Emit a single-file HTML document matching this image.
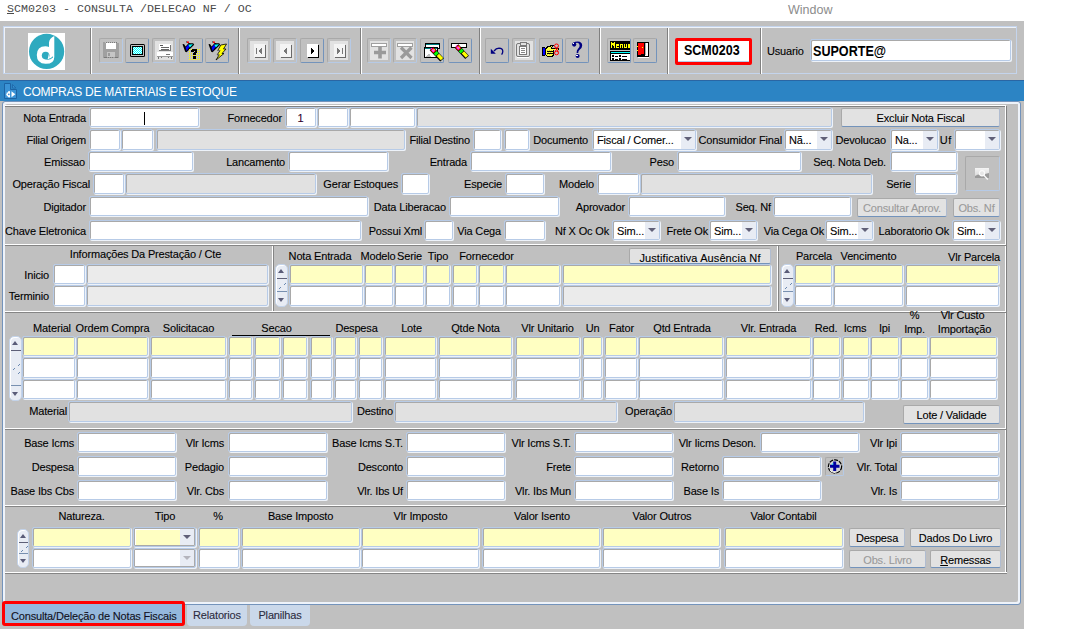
<!DOCTYPE html><html><head><meta charset="utf-8"><style>
*{margin:0;padding:0;box-sizing:border-box}
html,body{width:1080px;height:629px;overflow:hidden;background:#fff}
body{position:relative;font-family:"Liberation Sans",sans-serif;font-size:11px;color:#000}
div{position:absolute}
.l{white-space:nowrap;line-height:13px;letter-spacing:-0.17px;-webkit-text-stroke:0.1px currentColor}
.r{text-align:right}
.c{text-align:center}
.f{background:#fff;border:1px solid #b7cbe7;border-radius:2px;box-shadow:inset 1px 1px 0 #a9a9a9,1px 1px 0 #edf2f9}
.d{background:#e1e1e1}
.d2{background:#ebebeb}
.y{background:#ffffc2}
.s .st{position:absolute;left:4px;top:4px;line-height:13px;letter-spacing:-0.17px;white-space:nowrap;-webkit-text-stroke:0.1px #000}
.s .sa{position:absolute;right:0;top:1px;bottom:0;width:14px;background:#e8ecf4}
.sr{box-shadow:inset 0 0 0 1px #a9a9a9,inset 2px 2px 0 #fff,1px 1px 0 #edf2f9}
.sr .sa{right:1px;top:1px;bottom:1px}
.s .sa i{position:absolute;left:3px;top:6px;width:0;height:0;border-left:4px solid transparent;border-right:4px solid transparent;border-top:4.5px solid #606078}
.s .sad i{border-top-color:#b4b4bc}
.b{background:#e2e2e2;border:1px solid #a9a9a9;border-bottom-color:#7393bb;border-right-color:#b0bcd0;border-radius:2px;text-align:center;line-height:16px;padding-top:1px;letter-spacing:-0.17px;white-space:nowrap;color:#000;-webkit-text-stroke:0.1px currentColor}
.bd{color:#9a9a9a}
.hs{height:2px;border-top:1px solid #fff;border-bottom:1px solid #858585}
.vs{width:2px;border-left:1px solid #fff;border-right:1px solid #858585}
.sc{background:#e8ecf4;border:1px solid #c3d3ea;border-radius:5px;box-shadow:inset 1px 1px 0 #fff}
.sc i{position:absolute;display:block}
.sc .up{left:2px;top:4px;width:0;height:0;border-left:3.5px solid transparent;border-right:3.5px solid transparent;border-bottom:4px solid #5a5c78}
.sc .dn{left:2px;bottom:4px;width:0;height:0;border-left:3.5px solid transparent;border-right:3.5px solid transparent;border-top:4px solid #5a5c78}
.sc .d1{left:1px;right:0;top:13px;height:1px;background:#5e6078}
.sc .d2{left:1px;right:0;bottom:14px;height:1px;background:#7890b0}
.sc .g{width:2px;height:2px;background:linear-gradient(135deg,transparent 30%,#6a88b0 30%,#6a88b0 70%,transparent 70%)}
.tb{border:1px solid #a9a9a9;border-right-color:#b6cae6;border-bottom-color:#b6cae6;border-radius:2px}
.tb2{border-right-color:#7393bb;border-bottom-color:#7393bb}
</style></head><body>
<div style="left:7px;top:3px;font:11.67px/13px 'Liberation Mono',monospace;color:#4a4a4a;white-space:nowrap"><u>S</u>CM0203 - CONSULTA /DELECAO NF / OC</div>
<div style="left:788px;top:3px;font:12.5px/14px 'Liberation Sans',sans-serif;color:#8c8c8c">Window</div>
<div style="left:0;top:21px;width:1024px;height:608px;background:#c0c0c0"></div>
<div style="left:3px;top:26px;width:1014px;height:48px;border:1px solid #c4d4ec;box-shadow:inset 1px 1px 0 #eef2f8"></div>
<div style="left:238px;top:28px;width:2px;height:46px;border-left:1px solid #808080;border-right:1px solid #fff"></div>
<div style="left:360px;top:28px;width:2px;height:46px;border-left:1px solid #808080;border-right:1px solid #fff"></div>
<div style="left:479px;top:28px;width:2px;height:46px;border-left:1px solid #808080;border-right:1px solid #fff"></div>
<div style="left:599px;top:28px;width:2px;height:46px;border-left:1px solid #808080;border-right:1px solid #fff"></div>
<div style="left:667px;top:28px;width:2px;height:46px;border-left:1px solid #808080;border-right:1px solid #fff"></div>
<div style="left:760px;top:28px;width:2px;height:46px;border-left:1px solid #808080;border-right:1px solid #fff"></div>
<div style="left:90px;top:28px;width:2px;height:46px;border-left:1px solid #808080;border-right:1px solid #fff"></div>
<div style="left:28px;top:33px;width:37px;height:37px;background:#fff"><svg width="37" height="37" viewBox="0 0 37 37"><circle cx="18.6" cy="18.4" r="17.6" fill="#2eaabf"/><path d="M26.3 3 L26.3 24 Q26.3 31 17.5 30.8 Q8.8 30.6 8.8 22 Q8.9 13.4 17.4 13.3 Q19.6 13.3 21 14 L21 9.5 Q21.4 5 26.3 3 Z" fill="#fff"/><circle cx="17.6" cy="22.6" r="3.8" fill="#2eaabf"/><path d="M17.2 26.3 Q21.5 27.8 25 24.6 L25 23.2 Q22 26 19.6 25.7 Z" fill="#2eaabf"/><path d="M21 20 L21 25.5 Q20.5 26.2 19.8 26 Z" fill="#fff"/></svg></div>
<div class="tb" style="left:99px;top:38px;width:24px;height:25px"><svg style="position:absolute;left:1px;top:0" width="22" height="23" viewBox="0 0 22 23" shape-rendering="crispEdges"><rect x="2" y="4" width="16" height="15" fill="#a0a0a0"/><g fill="#7a7a7a"><rect x="5" y="3" width="1" height="1"/><rect x="7" y="3" width="1" height="1"/><rect x="9" y="3" width="1" height="1"/><rect x="11" y="3" width="1" height="1"/><rect x="13" y="3" width="1" height="1"/><rect x="15" y="3" width="1" height="1"/><rect x="3" y="18" width="3" height="1"/><rect x="7" y="18" width="1" height="1"/><rect x="9" y="18" width="1" height="1"/><rect x="11" y="18" width="1" height="1"/><rect x="14" y="18" width="3" height="1"/></g><rect x="2" y="3" width="2" height="1" fill="#a0a0a0"/><rect x="5" y="4" width="10" height="6" fill="#fff"/><rect x="6" y="13" width="8" height="5" fill="#c6c6c6"/><rect x="7" y="14" width="2" height="3" fill="#9a9a9a"/></svg></div>
<div class="tb tb2" style="left:125px;top:38px;width:24px;height:25px"><svg style="position:absolute;left:0px;top:0" width="22" height="23" viewBox="0 0 22 23" shape-rendering="crispEdges"><rect x="4" y="5" width="15" height="13" rx="1.5" fill="#000" shape-rendering="auto"/><rect x="5" y="6" width="13" height="11" fill="#c0c0c0"/><rect x="6" y="7" width="11" height="9" fill="#000"/><rect x="7" y="8" width="9" height="7" fill="#00ffff"/><g fill="#e8ffff"><rect x="8" y="8" width="1" height="1"/><rect x="10" y="8" width="1" height="1"/><rect x="12" y="8" width="1" height="1"/><rect x="14" y="8" width="1" height="1"/><rect x="7" y="9" width="1" height="1"/><rect x="9" y="9" width="1" height="1"/><rect x="11" y="9" width="1" height="1"/><rect x="13" y="9" width="1" height="1"/><rect x="15" y="9" width="1" height="1"/><rect x="8" y="10" width="1" height="1"/><rect x="10" y="10" width="1" height="1"/><rect x="12" y="10" width="1" height="1"/><rect x="14" y="10" width="1" height="1"/><rect x="7" y="11" width="1" height="1"/><rect x="9" y="11" width="1" height="1"/><rect x="11" y="11" width="1" height="1"/><rect x="13" y="11" width="1" height="1"/><rect x="15" y="11" width="1" height="1"/><rect x="8" y="12" width="1" height="1"/><rect x="10" y="12" width="1" height="1"/><rect x="12" y="12" width="1" height="1"/><rect x="14" y="12" width="1" height="1"/><rect x="7" y="13" width="1" height="1"/><rect x="9" y="13" width="1" height="1"/><rect x="11" y="13" width="1" height="1"/><rect x="13" y="13" width="1" height="1"/><rect x="15" y="13" width="1" height="1"/><rect x="8" y="14" width="1" height="1"/><rect x="10" y="14" width="1" height="1"/><rect x="12" y="14" width="1" height="1"/><rect x="14" y="14" width="1" height="1"/></g></svg></div>
<div class="tb" style="left:152px;top:38px;width:24px;height:25px"><div style="left:2px;top:2px;right:2px;bottom:2px;background:#e2e2e2"></div><svg style="position:absolute;left:0px;top:0" width="22" height="23" viewBox="0 0 22 23" shape-rendering="crispEdges"><rect x="6" y="5" width="12" height="7" fill="#fff"/><rect x="6" y="11" width="12" height="1" fill="#777"/><rect x="17" y="6" width="1" height="6" fill="#777"/><rect x="7" y="6" width="3" height="1" fill="#555"/><rect x="8" y="8" width="8" height="1" fill="#666"/><rect x="8" y="10" width="8" height="1" fill="#666"/><rect x="4" y="13" width="16" height="5" fill="#fff"/><rect x="4" y="17" width="16" height="1" fill="#9a9a9a"/><rect x="13" y="15" width="4" height="1" fill="#777"/><rect x="5" y="18" width="1" height="2" fill="#777"/><rect x="8" y="18" width="1" height="1" fill="#777"/><rect x="15" y="18" width="1" height="1" fill="#777"/><rect x="18" y="18" width="1" height="2" fill="#777"/></svg></div>
<div class="tb tb2" style="left:179px;top:38px;width:24px;height:25px"><svg style="position:absolute;left:1px;top:0" width="22" height="23" viewBox="0 0 22 23" shape-rendering="crispEdges"><g shape-rendering="auto"><path d="M1.5 5.3 L3 5 L4.6 7.6 L7.3 4.6 L8.3 4.2 L12.2 4.2 L13.2 5.8 L5.6 13.2 L4.2 12.8 Z" fill="#000"/><path d="M4.6 8.4 L7.4 5.4 L8.8 7.6 L5.6 12 Z" fill="#0000ff"/><path d="M7.4 5.4 L12 5.3 L8.8 8.6 Z" fill="#00ffff"/><path d="M5.2 2.8 L9.2 5" stroke="#000" stroke-width="1"/><rect x="6" y="2.4" width="1.8" height="1.6" fill="#ff0000"/></g><g fill="#ffff00"><rect x="8" y="10" width="1" height="1"/><rect x="10" y="10" width="1" height="1"/><rect x="12" y="10" width="1" height="1"/><rect x="14" y="10" width="1" height="1"/><rect x="16" y="10" width="1" height="1"/><rect x="18" y="10" width="1" height="1"/><rect x="8" y="12" width="1" height="1"/><rect x="10" y="12" width="1" height="1"/><rect x="12" y="12" width="1" height="1"/><rect x="14" y="12" width="1" height="1"/><rect x="16" y="12" width="1" height="1"/><rect x="18" y="12" width="1" height="1"/><rect x="8" y="14" width="1" height="1"/><rect x="10" y="14" width="1" height="1"/><rect x="12" y="14" width="1" height="1"/><rect x="14" y="14" width="1" height="1"/><rect x="16" y="14" width="1" height="1"/><rect x="18" y="14" width="1" height="1"/><rect x="8" y="16" width="1" height="1"/><rect x="10" y="16" width="1" height="1"/><rect x="12" y="16" width="1" height="1"/><rect x="14" y="16" width="1" height="1"/><rect x="16" y="16" width="1" height="1"/><rect x="18" y="16" width="1" height="1"/><rect x="8" y="18" width="1" height="1"/><rect x="10" y="18" width="1" height="1"/><rect x="12" y="18" width="1" height="1"/><rect x="14" y="18" width="1" height="1"/><rect x="16" y="18" width="1" height="1"/><rect x="18" y="18" width="1" height="1"/><rect x="8" y="20" width="1" height="1"/><rect x="10" y="20" width="1" height="1"/><rect x="12" y="20" width="1" height="1"/><rect x="14" y="20" width="1" height="1"/><rect x="16" y="20" width="1" height="1"/><rect x="18" y="20" width="1" height="1"/></g><path d="M10.3 11.2 L11.3 10 H15 L16.4 11.3 V13 L14.6 14.8 V16.2 H12.2 V14.2 L14 12.5 V11.9 H12.5 V13 H10.3 Z" fill="#000"/><rect x="12.2" y="17.2" width="2.4" height="2.4" fill="#000"/></svg></div>
<div class="tb tb2" style="left:205px;top:38px;width:24px;height:25px"><svg style="position:absolute;left:1px;top:0" width="22" height="23" viewBox="0 0 22 23" shape-rendering="crispEdges"><g shape-rendering="auto"><path d="M1.5 5.3 L3 5 L4.6 7.6 L7.3 4.6 L8.3 4.2 L12.2 4.2 L13.2 5.8 L5.6 13.2 L4.2 12.8 Z" fill="#000"/><path d="M4.6 8.4 L7.4 5.4 L8.8 7.6 L5.6 12 Z" fill="#0000ff"/><path d="M7.4 5.4 L12 5.3 L8.8 8.6 Z" fill="#00ffff"/><path d="M5.2 2.8 L9.2 5" stroke="#000" stroke-width="1"/><rect x="6" y="2.4" width="1.8" height="1.6" fill="#ff0000"/></g><g shape-rendering="auto"><path d="M13.8 6 L19.5 5 L16.5 10 L19 10 L15 14.5 L17 14.5 L9 21 L12.2 15.8 L10.2 15.8 L13 11.5 L10.8 11.5 Z" fill="#ffff00" stroke="#000" stroke-width=".8"/><path d="M10.8 11.5 L13 11.5 M10.2 15.8 L12.2 15.8" stroke="#808080" stroke-width=".8"/></g></svg></div>
<div class="tb" style="left:247px;top:38px;width:24px;height:25px"><div style="left:2px;top:2px;right:2px;bottom:2px;background:#e2e2e2"></div><svg style="position:absolute;left:1px;top:0" width="22" height="23" viewBox="0 0 22 23" shape-rendering="crispEdges"><rect x="5" y="5" width="11" height="13" fill="#f4f4f4"/><rect x="16" y="6" width="1" height="13" fill="#6a6a6a"/><rect x="6" y="18" width="11" height="1" fill="#6a6a6a"/><rect x="7" y="9" width="1" height="6" fill="#777"/><path d="M13 8.5 L9.2 12 L13 15.5 Z" fill="#777"/></svg></div>
<div class="tb" style="left:273px;top:38px;width:24px;height:25px"><div style="left:2px;top:2px;right:2px;bottom:2px;background:#e2e2e2"></div><svg style="position:absolute;left:1px;top:0" width="22" height="23" viewBox="0 0 22 23" shape-rendering="crispEdges"><rect x="5" y="5" width="11" height="13" fill="#f4f4f4"/><rect x="16" y="6" width="1" height="13" fill="#6a6a6a"/><rect x="6" y="18" width="11" height="1" fill="#6a6a6a"/><path d="M12 8.5 L8.2 12 L12 15.5 Z" fill="#777"/></svg></div>
<div class="tb tb2" style="left:300px;top:38px;width:24px;height:25px"><svg style="position:absolute;left:1px;top:0" width="22" height="23" viewBox="0 0 22 23" shape-rendering="crispEdges"><rect x="5" y="5" width="11" height="13" fill="#fff"/><rect x="16" y="6" width="1" height="13" fill="#000"/><rect x="6" y="18" width="11" height="1" fill="#000"/><path d="M9 8.5 L12.8 12 L9 15.5 Z" fill="#000"/></svg></div>
<div class="tb" style="left:327px;top:38px;width:24px;height:25px"><div style="left:2px;top:2px;right:2px;bottom:2px;background:#e2e2e2"></div><svg style="position:absolute;left:1px;top:0" width="22" height="23" viewBox="0 0 22 23" shape-rendering="crispEdges"><rect x="5" y="5" width="11" height="13" fill="#f4f4f4"/><rect x="16" y="6" width="1" height="13" fill="#6a6a6a"/><rect x="6" y="18" width="11" height="1" fill="#6a6a6a"/><rect x="13" y="9" width="1" height="6" fill="#777"/><path d="M8 8.5 L11.8 12 L8 15.5 Z" fill="#777"/></svg></div>
<div class="tb" style="left:367px;top:38px;width:24px;height:25px"><div style="left:2px;top:2px;right:2px;bottom:2px;background:#e2e2e2"></div><svg style="position:absolute;left:1px;top:0" width="22" height="23" viewBox="0 0 22 23" shape-rendering="crispEdges"><rect x="2.5" y="4.5" width="15" height="3" fill="#fff" stroke="#a0a0a0" stroke-width="1"/><path d="M9.2 7.5 H12.8 V11.7 H17 V15.3 H12.8 V19.5 H9.2 V15.3 H5 V11.7 H9.2 Z" fill="#9a9a9a" shape-rendering="auto"/></svg></div>
<div class="tb" style="left:393px;top:38px;width:24px;height:25px"><div style="left:2px;top:2px;right:2px;bottom:2px;background:#e2e2e2"></div><svg style="position:absolute;left:1px;top:0" width="22" height="23" viewBox="0 0 22 23" shape-rendering="crispEdges"><rect x="2.5" y="4.5" width="15" height="3" fill="#fff" stroke="#a0a0a0" stroke-width="1"/><path d="M6 8.5 L16.5 19 M16.5 8.5 L6 19" stroke="#9a9a9a" stroke-width="3.2" shape-rendering="auto"/></svg></div>
<div class="tb tb2" style="left:420px;top:38px;width:24px;height:25px"><svg style="position:absolute;left:1px;top:0" width="22" height="23" viewBox="0 0 22 23" shape-rendering="crispEdges"><rect x="3.5" y="4.5" width="14" height="5" fill="#fff" stroke="#000" stroke-width="1"/><rect x="4" y="5" width="13" height="1" fill="#008080"/><rect x="2.5" y="8.5" width="13" height="10" fill="#fff" stroke="#000" stroke-width="1"/><rect x="3" y="9" width="12" height="1" fill="#008080"/><path d="M3 18 L7 14 L9 18 Z" fill="#c0c0c0"/><g transform="translate(9.5,9.5) rotate(47)" shape-rendering="auto"><rect x="0" y="-2.5" width="15.5" height="5" fill="#000"/><rect x="0.4" y="-2" width="4.4" height="4" fill="#ff0000"/><rect x="1.2" y="-1" width="2.8" height="2.3" fill="#ff40ff"/><rect x="2" y="-1.9" width="1.4" height="1.2" fill="#ffff00"/><rect x="5.4" y="-2" width="3" height="4" fill="#00ff00"/><rect x="9" y="-2" width="6" height="3.3" fill="#ffff00"/><rect x="-0.5" y="-0.6" width="1" height="1.2" fill="#ff00ff"/></g></svg></div>
<div class="tb tb2" style="left:448px;top:38px;width:24px;height:25px"><svg style="position:absolute;left:0px;top:0" width="22" height="23" viewBox="0 0 22 23" shape-rendering="crispEdges"><rect x="2.5" y="4.5" width="15" height="4" fill="#fff" stroke="#000" stroke-width="1"/><g transform="translate(7.5,7) rotate(47)" shape-rendering="auto"><rect x="0" y="-2.5" width="15.5" height="5" fill="#000"/><rect x="0.4" y="-2" width="4.4" height="4" fill="#ff0000"/><rect x="1.2" y="-1" width="2.8" height="2.3" fill="#ff40ff"/><rect x="2" y="-1.9" width="1.4" height="1.2" fill="#ffff00"/><rect x="5.4" y="-2" width="3" height="4" fill="#00ff00"/><rect x="9" y="-2" width="6" height="3.3" fill="#ffff00"/><rect x="-0.5" y="-0.6" width="1" height="1.2" fill="#ff00ff"/></g></svg></div>
<div class="tb tb2" style="left:485px;top:38px;width:24px;height:25px"><svg style="position:absolute;left:1px;top:0" width="22" height="23" viewBox="0 0 22 23" shape-rendering="crispEdges"><g shape-rendering="auto"><path d="M7 12 Q9 9.2 12 9.2 Q15.8 9.3 15.8 12.3 Q15.8 14 14.6 15.6" fill="none" stroke="#000080" stroke-width="1.3"/><path d="M3.8 9.8 L3.8 14.8 L8.8 14.8 Z" fill="#000080"/></g></svg></div>
<div class="tb" style="left:512px;top:38px;width:24px;height:25px"><div style="left:2px;top:2px;right:2px;bottom:2px;background:#e2e2e2"></div><svg style="position:absolute;left:1px;top:0" width="22" height="23" viewBox="0 0 22 23" shape-rendering="crispEdges"><rect x="2.5" y="4.5" width="13" height="13" rx="1.5" fill="none" stroke="#7a7a7a" stroke-width="1" shape-rendering="auto"/><rect x="3" y="17.5" width="12" height="1" fill="#fff"/><rect x="6" y="3" width="6" height="3" fill="#e2e2e2" stroke="#7a7a7a" stroke-width="1"/><rect x="8" y="2.5" width="2" height="1" fill="#7a7a7a"/><rect x="5.5" y="7.5" width="7" height="8" fill="#fff" stroke="#7a7a7a" stroke-width="1"/><rect x="7" y="9" width="4" height="1" fill="#888"/><rect x="7" y="11" width="4" height="1" fill="#888"/><rect x="7" y="13" width="4" height="1" fill="#888"/></svg></div>
<div class="tb tb2" style="left:539px;top:38px;width:24px;height:25px"><svg style="position:absolute;left:1px;top:0" width="22" height="23" viewBox="0 0 22 23" shape-rendering="crispEdges"><rect x="1" y="8" width="3" height="9" fill="#000"/><rect x="1.5" y="9" width="2" height="7" fill="#0000ff"/><path d="M4 9 L7 7 L12 5.5 L13 6.5 L11 9 H18 V11 H13 L13 16 L11 18 H6 L4 16 Z" fill="#000"/><path d="M5 10 L7.5 8.2 L11 7 L9.8 9.8 H17 V10.5 H12 L12 15.5 L10.5 17 H6.5 L5 15.5 Z" fill="#ffff40"/><g fill="#c8c840"><rect x="6" y="11" width="1" height="1"/><rect x="8" y="11" width="1" height="1"/><rect x="10" y="11" width="1" height="1"/><rect x="7" y="13" width="1" height="1"/><rect x="9" y="13" width="1" height="1"/><rect x="6" y="15" width="1" height="1"/><rect x="8" y="15" width="1" height="1"/></g><rect x="6" y="12" width="6" height="1" fill="#000"/><rect x="6" y="14" width="6" height="1" fill="#000"/><g shape-rendering="auto" fill="none" stroke="#ff0000" stroke-width="1"><ellipse cx="15.5" cy="6.8" rx="2" ry="1.8"/><ellipse cx="15.5" cy="14" rx="2" ry="1.8"/></g><path d="M14 8.5 L17.5 12.5 M17 8.5 L14 12.5" stroke="#ff0000" stroke-width="1" shape-rendering="auto"/></svg></div>
<div class="tb tb2" style="left:565px;top:38px;width:24px;height:25px"><svg style="position:absolute;left:1px;top:0" width="22" height="23" viewBox="0 0 22 23" shape-rendering="crispEdges"><g shape-rendering="auto" fill="#000080"><circle cx="7.2" cy="5.6" r="2.1"/><path d="M6 4 Q8 2.6 10.8 2.6 Q15.2 2.9 15.2 6.6 Q15.2 9.4 12.4 11 Q11.2 11.8 11.2 14 H9.6 Q9.4 11.2 11.2 9.6 Q12.8 8 12.6 6.2 Q12.4 4 10.3 3.8 Q8.2 3.8 7.2 5 Z"/><circle cx="10.6" cy="16.9" r="2"/></g><circle cx="6.7" cy="4.9" r=".6" fill="#fff"/><circle cx="10" cy="16.3" r=".6" fill="#fff"/></svg></div>
<div class="tb tb2" style="left:607px;top:38px;width:24px;height:25px"><svg style="position:absolute;left:1px;top:0" width="22" height="23" viewBox="0 0 22 23" shape-rendering="crispEdges"><rect x="1" y="2" width="20" height="9" fill="#000"/><g fill="#ffff00"><path d="M2 3 H3 L4 5 L5 3 H6 V9 H5 V5.5 L4 7.5 L3 5.5 V9 H2 Z"/><path d="M7 5 H10 V7 H8 V8 H10 V9 H7 Z M8 6 H9 V6.5 H8 Z"/><path d="M11 5 H14 V9 H13 V6 H12 V9 H11 Z"/><path d="M15 5 H16 V8 H17 V5 H18 V9 H15 Z"/><rect x="19" y="5" width="2" height="4"/></g><rect x="1" y="12" width="20" height="10" fill="#000"/><rect x="2" y="13" width="19" height="1" fill="#00ffff"/><rect x="2" y="15" width="19" height="6" fill="#fff"/><g fill="#000"><rect x="3" y="16" width="2" height="1.5"/><rect x="6" y="16.5" width="3" height="1"/><rect x="10" y="16" width="2" height="1.5"/><rect x="13" y="16.5" width="5" height="1"/><rect x="3" y="19" width="2" height="1.5"/><rect x="6" y="19.5" width="3" height="1"/><rect x="10" y="19" width="2" height="1.5"/><rect x="13" y="19.5" width="5" height="1"/></g></svg></div>
<div class="tb tb2" style="left:633px;top:38px;width:24px;height:25px"><svg style="position:absolute;left:1px;top:0" width="22" height="23" viewBox="0 0 22 23" shape-rendering="crispEdges"><rect x="2" y="3" width="12" height="15" fill="#000"/><rect x="10" y="4" width="3" height="13" fill="#fff"/><rect x="10" y="4" width="1" height="12" fill="#b0b0b0"/><rect x="3" y="18" width="11" height="1" fill="#fff"/><path d="M3 4 H9 V14 L8 15 H6 V16 H3 Z" fill="#ff0000"/><rect x="7" y="8" width="1" height="1" fill="#ffff00"/><rect x="2" y="7" width="1" height="1" fill="#ffff00"/><rect x="2" y="11" width="1" height="1" fill="#ffff00"/></svg></div>
<div style="left:675px;top:38px;width:77px;height:27px;border:3px solid #ff0000;border-radius:2px;background:#fff"><div style="left:0;top:0;right:0;bottom:0;border-bottom:1px solid #b7cbe7"></div><div style="left:6px;top:1px;font:bold 14px/16px 'Liberation Sans';color:#000;transform:scaleX(0.893);transform-origin:0 0;white-space:nowrap">SCM0203</div></div>
<div class="l" style="left:767px;top:45px;font-size:11px;color:#000">Usuario</div>
<div class="f" style="left:810px;top:39px;width:201px;height:22px"><div style="left:2px;top:3px;font:bold 14px/16px 'Liberation Sans';color:#000;transform:scaleX(0.898);transform-origin:0 0;white-space:nowrap">SUPORTE@</div></div>
<div style="left:0;top:80px;width:1024px;height:21px;background:#2c84c4;border-top:1px solid #2a66a4"></div>
<div style="left:4px;top:83px;width:14px;height:17px"><svg width="14" height="17" viewBox="0 0 14 17"><path d="M0.5 0.5 H6.5 V6.5 H12.5 V15.5 H0.5 Z" fill="#3b93d6" stroke="#1d64a4"/><path d="M8.5 1.5 L11.8 5 H8.5 Z" fill="#3b93d6" stroke="#1d64a4" stroke-width=".8"/><path d="M6 7.8 V14.8 L5 14 L4.2 14.6 L3.8 13.2 L2.6 13.2 L2.8 12 L1.8 11.3 L2.8 10.6 L2.6 9.4 L3.8 9.4 L4.2 8.1 L5 8.6 Z" fill="#fff"/><circle cx="4.8" cy="11.3" r=".9" fill="#3b93d6"/><path d="M7.5 8.3 L11.3 11.3 L7.5 14.3 Z" fill="#fff"/></svg></div>
<div style="left:23px;top:85px;font:12px/14px 'Liberation Sans';letter-spacing:-0.24px;color:#fff;white-space:nowrap">COMPRAS DE MATERIAIS E ESTOQUE</div>
<div style="left:2px;top:101px;width:1019px;height:504px;border:1px solid #7393bb;border-radius:3px;box-shadow:inset 2px 2px 0 #eef3fa, inset -2px -2px 0 #eef3fa"></div>
<div style="left:5px;top:105px;width:1001px;height:1px;background:#fff"></div>
<div style="left:5px;top:106px;width:1002px;height:1px;background:#808080"></div>
<div style="left:1005px;top:106px;width:1px;height:467px;background:#fff"></div>
<div style="left:1006px;top:106px;width:1px;height:468px;background:#808080"></div>
<div class="l r" style="right:994px;top:112px;">Nota Entrada</div>
<div class="f" style="left:89px;top:107px;width:110px;height:20px;"><div style="left:54px;top:4px;width:1px;height:13px;background:#000"></div></div>
<div class="l r" style="right:798px;top:112px;">Fornecedor</div>
<div class="f" style="left:285px;top:107px;width:31px;height:20px;"><div class="l c" style="left:0;right:0;top:4px;color:#300030">1</div></div>
<div class="f " style="left:317px;top:107px;width:31px;height:20px;"></div>
<div class="f " style="left:349px;top:107px;width:66px;height:20px;"></div>
<div class="f d" style="left:416px;top:107px;width:416px;height:20px;"></div>
<div class="b" style="left:841px;top:108px;width:159px;height:19px;">Excluir Nota Fiscal</div>
<div class="l r" style="right:994px;top:134px;">Filial Origem</div>
<div class="f " style="left:89px;top:129px;width:31px;height:21px;"></div>
<div class="f " style="left:121px;top:129px;width:32px;height:21px;"></div>
<div class="f d" style="left:156px;top:129px;width:249px;height:21px;"></div>
<div class="l r" style="right:610px;top:134px;">Filial Destino</div>
<div class="f " style="left:473px;top:129px;width:28px;height:21px;"></div>
<div class="f " style="left:504px;top:129px;width:25px;height:21px;"></div>
<div class="l r" style="right:492px;top:134px;">Documento</div>
<div class="f s " style="left:592px;top:129px;width:104px;height:21px;"><span class="st">Fiscal / Comer...</span><span class="sa"><i></i></span></div>
<div class="l r" style="right:298px;top:134px;">Consumidor Final</div>
<div class="f s " style="left:784px;top:129px;width:48px;height:21px;"><span class="st">Nã...</span><span class="sa"><i></i></span></div>
<div class="l r" style="right:194px;top:134px;">Devolucao</div>
<div class="f s " style="left:890px;top:129px;width:48px;height:21px;"><span class="st">Na...</span><span class="sa"><i></i></span></div>
<div class="l r" style="right:128px;top:134px;letter-spacing:0.6px">Uf</div>
<div class="f s " style="left:954px;top:129px;width:46px;height:21px;"><span class="st"></span><span class="sa"><i></i></span></div>
<div class="l r" style="right:995px;top:156px;">Emissao</div>
<div class="f " style="left:88px;top:151px;width:105px;height:20px;"></div>
<div class="l r" style="right:795px;top:156px;">Lancamento</div>
<div class="f " style="left:288px;top:151px;width:100px;height:20px;"></div>
<div class="l r" style="right:613px;top:156px;">Entrada</div>
<div class="f " style="left:470px;top:151px;width:141px;height:20px;"></div>
<div class="l r" style="right:406px;top:156px;">Peso</div>
<div class="f " style="left:677px;top:151px;width:124px;height:20px;"></div>
<div class="l r" style="right:194px;top:156px;">Seq. Nota Deb.</div>
<div class="f " style="left:890px;top:151px;width:67px;height:20px;"></div>
<div class="tb" style="left:965px;top:156px;width:35px;height:35px;"><svg style="position:absolute;left:9px;top:11px" width="15" height="13" viewBox="0 0 15 13"><defs><linearGradient id="ig" x1="0" y1="0" x2="0" y2="1"><stop offset="0" stop-color="#f4f4f4"/><stop offset="1" stop-color="#d4d4d4"/></linearGradient></defs><rect x="0" y="0" width="14" height="10" fill="url(#ig)"/><path d="M0 8 L3 6.5 L6 7.5 L10 6 L14 5 V10 H0 Z" fill="#9a9a9a"/><circle cx="7" cy="5.2" r="2.6" fill="#e6e6e6" stroke="#fafafa" stroke-width="1.2"/><path d="M8.8 7.2 L12.8 11.5" stroke="#fafafa" stroke-width="1.3"/></svg></div>
<div class="l r" style="right:990px;top:178px;">Operação Fiscal</div>
<div class="f " style="left:93px;top:173px;width:31px;height:21px;"></div>
<div class="f d" style="left:125px;top:173px;width:191px;height:21px;"></div>
<div class="l r" style="right:682px;top:178px;">Gerar Estoques</div>
<div class="f " style="left:401px;top:173px;width:28px;height:21px;"></div>
<div class="l r" style="right:578px;top:178px;">Especie</div>
<div class="f " style="left:505px;top:173px;width:39px;height:21px;"></div>
<div class="l r" style="right:486px;top:178px;">Modelo</div>
<div class="f " style="left:597px;top:173px;width:42px;height:21px;"></div>
<div class="f d" style="left:640px;top:173px;width:232px;height:21px;"></div>
<div class="l r" style="right:169px;top:178px;">Serie</div>
<div class="f " style="left:914px;top:173px;width:43px;height:21px;"></div>
<div class="l r" style="right:994px;top:201px;">Digitador</div>
<div class="f " style="left:89px;top:196px;width:279px;height:20px;"></div>
<div class="l r" style="right:634px;top:201px;">Data Liberacao</div>
<div class="f " style="left:449px;top:196px;width:110px;height:20px;"></div>
<div class="l r" style="right:455px;top:201px;">Aprovador</div>
<div class="f " style="left:628px;top:196px;width:97px;height:20px;"></div>
<div class="l r" style="right:309px;top:201px;">Seq. Nf</div>
<div class="f " style="left:773px;top:196px;width:78px;height:20px;"></div>
<div class="b bd" style="left:857px;top:198px;width:90px;height:19px;">Consultar Aprov.</div>
<div class="b bd" style="left:953px;top:198px;width:47px;height:19px;">Obs. Nf</div>
<div class="l r" style="right:994px;top:225px;">Chave Eletronica</div>
<div class="f " style="left:89px;top:220px;width:272px;height:20px;"></div>
<div class="l r" style="right:658px;top:225px;">Possui Xml</div>
<div class="f " style="left:424px;top:220px;width:29px;height:20px;"></div>
<div class="l r" style="right:579px;top:225px;">Via Cega</div>
<div class="f " style="left:504px;top:220px;width:41px;height:20px;"></div>
<div class="l r" style="right:471px;top:225px;">Nf X Oc Ok</div>
<div class="f s " style="left:612px;top:220px;width:48px;height:20px;"><span class="st">Sim...</span><span class="sa"><i></i></span></div>
<div class="l r" style="right:372px;top:225px;">Frete Ok</div>
<div class="f s " style="left:709px;top:220px;width:48px;height:20px;"><span class="st">Sim...</span><span class="sa"><i></i></span></div>
<div class="l r" style="right:256px;top:225px;">Via Cega Ok</div>
<div class="f s " style="left:825px;top:220px;width:48px;height:20px;"><span class="st">Sim...</span><span class="sa"><i></i></span></div>
<div class="l r" style="right:131px;top:225px;">Laboratorio Ok</div>
<div class="f s " style="left:952px;top:220px;width:48px;height:20px;"><span class="st">Sim...</span><span class="sa"><i></i></span></div>
<div class="hs" style="left:5px;top:244px;width:1001px"></div>
<div class="l c" style="left:49px;width:193px;top:248px;">Informações Da Prestação / Cte</div>
<div class="l r" style="right:1031px;top:269px;">Inicio</div>
<div class="f " style="left:53px;top:264px;width:32px;height:20px;"></div>
<div class="f d2" style="left:86px;top:264px;width:182px;height:20px;"></div>
<div class="l r" style="right:1031px;top:290px;">Terminio</div>
<div class="f " style="left:53px;top:285px;width:32px;height:21px;"></div>
<div class="f d2" style="left:86px;top:285px;width:182px;height:21px;"></div>
<div class="vs" style="left:272px;top:246px;height:65px"></div>
<div class="l c" style="left:269px;width:102px;top:250px;">Nota Entrada</div>
<div class="l c" style="left:341px;width:74px;top:250px;">Modelo</div>
<div class="l c" style="left:377px;width:65px;top:250px;">Serie</div>
<div class="l c" style="left:408px;width:60px;top:250px;">Tipo</div>
<div class="l c" style="left:439px;width:95px;top:250px;">Fornecedor</div>
<div class="b" style="left:629px;top:248px;width:142px;height:16px;"><span style="letter-spacing:0.1px">Justificativa Ausência Nf</span></div>
<div class="sc" style="left:275px;top:264px;width:13px;height:43px"><i class="up"></i><i class="d1" style="top:13px"></i><i class="g" style="left:8px;top:18px"></i><i class="g" style="left:3px;top:22px"></i><i class="d2" style="bottom:14px"></i><i class="dn"></i></div>
<div class="f y" style="left:289px;top:264px;width:74px;height:20px;"></div>
<div class="f " style="left:289px;top:285px;width:74px;height:21px;"></div>
<div class="f y" style="left:364px;top:264px;width:29px;height:20px;"></div>
<div class="f " style="left:364px;top:285px;width:29px;height:21px;"></div>
<div class="f y" style="left:394px;top:264px;width:30px;height:20px;"></div>
<div class="f " style="left:394px;top:285px;width:30px;height:21px;"></div>
<div class="f y" style="left:425px;top:264px;width:25px;height:20px;"></div>
<div class="f " style="left:425px;top:285px;width:25px;height:21px;"></div>
<div class="f y" style="left:452px;top:264px;width:25px;height:20px;"></div>
<div class="f " style="left:452px;top:285px;width:25px;height:21px;"></div>
<div class="f y" style="left:478px;top:264px;width:26px;height:20px;"></div>
<div class="f " style="left:478px;top:285px;width:26px;height:21px;"></div>
<div class="f y" style="left:505px;top:264px;width:55px;height:20px;"></div>
<div class="f " style="left:505px;top:285px;width:55px;height:21px;"></div>
<div class="f y" style="left:562px;top:264px;width:209px;height:20px;"></div>
<div class="f d2" style="left:562px;top:285px;width:209px;height:21px;"></div>
<div class="vs" style="left:777px;top:246px;height:65px"></div>
<div class="sc" style="left:781px;top:264px;width:13px;height:43px"><i class="up"></i><i class="d1" style="top:13px"></i><i class="g" style="left:8px;top:18px"></i><i class="g" style="left:3px;top:22px"></i><i class="d2" style="bottom:14px"></i><i class="dn"></i></div>
<div class="f y" style="left:794px;top:264px;width:38px;height:20px;"></div>
<div class="f " style="left:794px;top:285px;width:38px;height:21px;"></div>
<div class="f y" style="left:833px;top:264px;width:70px;height:20px;"></div>
<div class="f " style="left:833px;top:285px;width:70px;height:21px;"></div>
<div class="f y" style="left:905px;top:264px;width:94px;height:20px;"></div>
<div class="f " style="left:905px;top:285px;width:94px;height:21px;"></div>
<div class="l c" style="left:776px;width:76px;top:250px;">Parcela</div>
<div class="l c" style="left:820px;width:97px;top:250px;">Vencimento</div>
<div class="l r" style="right:80px;top:251px;">Vlr Parcela</div>
<div class="hs" style="left:5px;top:311px;width:1001px"></div>
<div class="l c" style="left:14px;width:76px;top:322px;">Material</div>
<div class="l c" style="left:57px;width:111px;top:322px;">Ordem Compra</div>
<div class="l c" style="left:143px;width:91px;top:322px;">Solicitacao</div>
<div class="l c" style="left:241px;width:71px;top:322px;">Secao</div>
<div class="l c" style="left:315px;width:83px;top:322px;">Despesa</div>
<div class="l c" style="left:381px;width:61px;top:322px;">Lote</div>
<div class="l c" style="left:432px;width:87px;top:322px;">Qtde Nota</div>
<div class="l c" style="left:501px;width:93px;top:322px;">Vlr Unitario</div>
<div class="l c" style="left:566px;width:53px;top:322px;">Un</div>
<div class="l c" style="left:589px;width:65px;top:322px;">Fator</div>
<div class="l c" style="left:634px;width:96px;top:322px;">Qtd Entrada</div>
<div class="l c" style="left:720px;width:97px;top:322px;">Vlr. Entrada</div>
<div class="l c" style="left:795px;width:62px;top:322px;">Red.</div>
<div class="l c" style="left:824px;width:62px;top:322px;">Icms</div>
<div class="l c" style="left:859px;width:51px;top:322px;">Ipi</div>
<div class="l c" style="left:885px;width:59px;top:309px;">%</div>
<div class="l c" style="left:885px;width:59px;top:323px;">Imp.</div>
<div class="l c" style="left:920px;width:85px;top:309px;">Vlr Custo</div>
<div class="l c" style="left:918px;width:93px;top:323px;">Importação</div>
<div style="left:232px;top:335px;width:98px;height:1px;background:#000"></div>
<div class="sc" style="left:9px;top:336px;width:13px;height:65px"><i class="up"></i><i class="d1" style="top:13px"></i><i class="g" style="left:8px;top:27px"></i><i class="g" style="left:3px;top:31px"></i><i class="g" style="left:8px;top:35px"></i><i class="d2" style="bottom:14px"></i><i class="dn"></i></div>
<div class="f y" style="left:22px;top:336px;width:53px;height:20px;"></div>
<div class="f " style="left:22px;top:357px;width:53px;height:21px;"></div>
<div class="f " style="left:22px;top:379px;width:53px;height:20px;"></div>
<div class="f y" style="left:76px;top:336px;width:72px;height:20px;"></div>
<div class="f " style="left:76px;top:357px;width:72px;height:21px;"></div>
<div class="f " style="left:76px;top:379px;width:72px;height:20px;"></div>
<div class="f y" style="left:150px;top:336px;width:76px;height:20px;"></div>
<div class="f " style="left:150px;top:357px;width:76px;height:21px;"></div>
<div class="f " style="left:150px;top:379px;width:76px;height:20px;"></div>
<div class="f y" style="left:228px;top:336px;width:24px;height:20px;"></div>
<div class="f " style="left:228px;top:357px;width:24px;height:21px;"></div>
<div class="f " style="left:228px;top:379px;width:24px;height:20px;"></div>
<div class="f y" style="left:254px;top:336px;width:26px;height:20px;"></div>
<div class="f " style="left:254px;top:357px;width:26px;height:21px;"></div>
<div class="f " style="left:254px;top:379px;width:26px;height:20px;"></div>
<div class="f y" style="left:282px;top:336px;width:25px;height:20px;"></div>
<div class="f " style="left:282px;top:357px;width:25px;height:21px;"></div>
<div class="f " style="left:282px;top:379px;width:25px;height:20px;"></div>
<div class="f y" style="left:310px;top:336px;width:22px;height:20px;"></div>
<div class="f " style="left:310px;top:357px;width:22px;height:21px;"></div>
<div class="f " style="left:310px;top:379px;width:22px;height:20px;"></div>
<div class="f y" style="left:334px;top:336px;width:22px;height:20px;"></div>
<div class="f " style="left:334px;top:357px;width:22px;height:21px;"></div>
<div class="f " style="left:334px;top:379px;width:22px;height:20px;"></div>
<div class="f y" style="left:358px;top:336px;width:24px;height:20px;"></div>
<div class="f " style="left:358px;top:357px;width:24px;height:21px;"></div>
<div class="f " style="left:358px;top:379px;width:24px;height:20px;"></div>
<div class="f y" style="left:384px;top:336px;width:52px;height:20px;"></div>
<div class="f " style="left:384px;top:357px;width:52px;height:21px;"></div>
<div class="f " style="left:384px;top:379px;width:52px;height:20px;"></div>
<div class="f y" style="left:438px;top:336px;width:74px;height:20px;"></div>
<div class="f " style="left:438px;top:357px;width:74px;height:21px;"></div>
<div class="f " style="left:438px;top:379px;width:74px;height:20px;"></div>
<div class="f y" style="left:515px;top:336px;width:65px;height:20px;"></div>
<div class="f " style="left:515px;top:357px;width:65px;height:21px;"></div>
<div class="f " style="left:515px;top:379px;width:65px;height:20px;"></div>
<div class="f y" style="left:582px;top:336px;width:20px;height:20px;"></div>
<div class="f " style="left:582px;top:357px;width:20px;height:21px;"></div>
<div class="f " style="left:582px;top:379px;width:20px;height:20px;"></div>
<div class="f y" style="left:604px;top:336px;width:33px;height:20px;"></div>
<div class="f " style="left:604px;top:357px;width:33px;height:21px;"></div>
<div class="f " style="left:604px;top:379px;width:33px;height:20px;"></div>
<div class="f y" style="left:638px;top:336px;width:85px;height:20px;"></div>
<div class="f " style="left:638px;top:357px;width:85px;height:21px;"></div>
<div class="f " style="left:638px;top:379px;width:85px;height:20px;"></div>
<div class="f y" style="left:725px;top:336px;width:86px;height:20px;"></div>
<div class="f " style="left:725px;top:357px;width:86px;height:21px;"></div>
<div class="f " style="left:725px;top:379px;width:86px;height:20px;"></div>
<div class="f y" style="left:812px;top:336px;width:28px;height:20px;"></div>
<div class="f " style="left:812px;top:357px;width:28px;height:21px;"></div>
<div class="f " style="left:812px;top:379px;width:28px;height:20px;"></div>
<div class="f y" style="left:842px;top:336px;width:27px;height:20px;"></div>
<div class="f " style="left:842px;top:357px;width:27px;height:21px;"></div>
<div class="f " style="left:842px;top:379px;width:27px;height:20px;"></div>
<div class="f y" style="left:870px;top:336px;width:29px;height:20px;"></div>
<div class="f " style="left:870px;top:357px;width:29px;height:21px;"></div>
<div class="f " style="left:870px;top:379px;width:29px;height:20px;"></div>
<div class="f y" style="left:900px;top:336px;width:28px;height:20px;"></div>
<div class="f " style="left:900px;top:357px;width:28px;height:21px;"></div>
<div class="f " style="left:900px;top:379px;width:28px;height:20px;"></div>
<div class="f y" style="left:929px;top:336px;width:68px;height:20px;"></div>
<div class="f " style="left:929px;top:357px;width:68px;height:21px;"></div>
<div class="f " style="left:929px;top:379px;width:68px;height:20px;"></div>
<div class="l r" style="right:1013px;top:405px;">Material</div>
<div class="f d" style="left:68px;top:401px;width:284px;height:21px;"></div>
<div class="l r" style="right:687px;top:405px;">Destino</div>
<div class="f d" style="left:394px;top:401px;width:223px;height:21px;"></div>
<div class="l r" style="right:408px;top:405px;">Operação</div>
<div class="f d" style="left:673px;top:401px;width:191px;height:21px;"></div>
<div class="b" style="left:903px;top:405px;width:97px;height:19px;">Lote / Validade</div>
<div class="hs" style="left:5px;top:428px;width:1001px"></div>
<div class="l r" style="right:1006px;top:437px;">Base Icms</div>
<div class="f " style="left:77px;top:432px;width:99px;height:20px;"></div>
<div class="l r" style="right:856px;top:437px;">Vlr Icms</div>
<div class="f " style="left:228px;top:432px;width:99px;height:20px;"></div>
<div class="l r" style="right:677px;top:437px;">Base Icms S.T.</div>
<div class="f " style="left:406px;top:432px;width:99px;height:20px;"></div>
<div class="l r" style="right:509px;top:437px;">Vlr Icms S.T.</div>
<div class="f " style="left:574px;top:432px;width:99px;height:20px;"></div>
<div class="l r" style="right:324px;top:437px;">Vlr Iicms Deson.</div>
<div class="f " style="left:760px;top:432px;width:99px;height:20px;"></div>
<div class="l r" style="right:183px;top:437px;">Vlr Ipi</div>
<div class="f " style="left:900px;top:432px;width:99px;height:20px;"></div>
<div class="l r" style="right:1006px;top:461px;">Despesa</div>
<div class="f " style="left:77px;top:456px;width:99px;height:20px;"></div>
<div class="l r" style="right:856px;top:461px;">Pedagio</div>
<div class="f " style="left:228px;top:456px;width:99px;height:20px;"></div>
<div class="l r" style="right:677px;top:461px;">Desconto</div>
<div class="f " style="left:406px;top:456px;width:99px;height:20px;"></div>
<div class="l r" style="right:509px;top:461px;">Frete</div>
<div class="f " style="left:574px;top:456px;width:99px;height:20px;"></div>
<div class="l r" style="right:361px;top:461px;">Retorno</div>
<div class="f " style="left:722px;top:456px;width:99px;height:20px;"></div>
<div class="l r" style="right:183px;top:461px;">Vlr. Total</div>
<div class="f " style="left:900px;top:456px;width:99px;height:20px;"></div>
<div class="l r" style="right:1006px;top:485px;">Base Ibs Cbs</div>
<div class="f " style="left:77px;top:480px;width:99px;height:20px;"></div>
<div class="l r" style="right:856px;top:485px;">Vlr. Cbs</div>
<div class="f " style="left:228px;top:480px;width:99px;height:20px;"></div>
<div class="l r" style="right:677px;top:485px;">Vlr. Ibs Uf</div>
<div class="f " style="left:406px;top:480px;width:99px;height:20px;"></div>
<div class="l r" style="right:509px;top:485px;">Vlr. Ibs Mun</div>
<div class="f " style="left:574px;top:480px;width:99px;height:20px;"></div>
<div class="l r" style="right:361px;top:485px;">Base Is</div>
<div class="f " style="left:722px;top:480px;width:99px;height:20px;"></div>
<div class="l r" style="right:183px;top:485px;">Vlr. Is</div>
<div class="f " style="left:900px;top:480px;width:99px;height:20px;"></div>
<div class="tb" style="left:825px;top:457px;width:19px;height:19px;"><svg style="position:absolute;left:0;top:0" width="17" height="17" viewBox="0 0 17 17"><circle cx="9" cy="8.5" r="6.6" fill="#d4d4d4" stroke="#000" stroke-width="1.2" stroke-dasharray="4 1"/><path d="M4 12 Q6 14.5 9 14.5" stroke="#fff" stroke-width="1" fill="none"/><path d="M7.2 3.5 H10.2 V6.8 H13.5 V9.8 H10.2 V13 H7.2 V9.8 H4 V6.8 H7.2 Z" fill="#0000a0"/><rect x="6" y="5.5" width="1.2" height="1.2" fill="#00e0ff"/></svg></div>
<div class="hs" style="left:5px;top:505px;width:1001px"></div>
<div class="l c" style="left:38px;width:87px;top:510px;">Natureza.</div>
<div class="l c" style="left:135px;width:60px;top:510px;">Tipo</div>
<div class="l c" style="left:193px;width:50px;top:510px;">%</div>
<div class="l c" style="left:248px;width:105px;top:510px;">Base Imposto</div>
<div class="l c" style="left:374px;width:93px;top:510px;">Vlr Imposto</div>
<div class="l c" style="left:493px;width:98px;top:510px;">Valor Isento</div>
<div class="l c" style="left:611px;width:102px;top:510px;">Valor Outros</div>
<div class="l c" style="left:730px;width:107px;top:510px;">Valor Contabil</div>
<div class="sc" style="left:17px;top:529px;width:12px;height:39px"><i class="up"></i><i class="d1" style="top:12px"></i><i class="g" style="left:8px;top:16px"></i><i class="g" style="left:3px;top:20px"></i><i class="d2" style="bottom:13px"></i><i class="dn"></i></div>
<div class="f y" style="left:32px;top:527px;width:99px;height:20px;"></div>
<div class="f " style="left:32px;top:548px;width:99px;height:20px;"></div>
<div class="f s y sr" style="left:133px;top:527px;width:63px;height:20px;"><span class="st"></span><span class="sa"><i></i></span></div>
<div class="f s sr" style="left:133px;top:548px;width:63px;height:20px;"><span class="st"></span><span class="sa sad"><i></i></span></div>
<div class="f y" style="left:198px;top:527px;width:41px;height:20px;"></div>
<div class="f " style="left:198px;top:548px;width:41px;height:20px;"></div>
<div class="f y" style="left:241px;top:527px;width:119px;height:20px;"></div>
<div class="f " style="left:241px;top:548px;width:119px;height:20px;"></div>
<div class="f y" style="left:361px;top:527px;width:118px;height:20px;"></div>
<div class="f " style="left:361px;top:548px;width:118px;height:20px;"></div>
<div class="f y" style="left:482px;top:527px;width:118px;height:20px;"></div>
<div class="f " style="left:482px;top:548px;width:118px;height:20px;"></div>
<div class="f y" style="left:602px;top:527px;width:118px;height:20px;"></div>
<div class="f " style="left:602px;top:548px;width:118px;height:20px;"></div>
<div class="f y" style="left:724px;top:527px;width:119px;height:20px;"></div>
<div class="f " style="left:724px;top:548px;width:119px;height:20px;"></div>
<div class="b" style="left:849px;top:528px;width:56px;height:19px;">Despesa</div>
<div class="b" style="left:910px;top:528px;width:91px;height:19px;">Dados Do Livro</div>
<div class="b bd" style="left:849px;top:550px;width:77px;height:18px;">Obs. Livro</div>
<div class="b" style="left:930px;top:550px;width:71px;height:18px;"><u>R</u>emessas</div>
<div class="hs" style="left:5px;top:572px;width:1002px"></div>
<div style="left:187px;top:605px;width:60px;height:21px;background:#cad8ea;border-radius:0 0 4px 4px"><div class="l c" style="left:0;right:0;top:4px;color:#2c2c40">Relatorios</div></div>
<div style="left:250px;top:605px;width:60px;height:21px;background:#cad8ea;border-radius:0 0 4px 4px"><div class="l c" style="left:0;right:0;top:4px;color:#2c2c40">Planilhas</div></div>
<div style="left:2px;top:601px;width:183px;height:25px;background:#94b8dc;border:3px solid #ff0000;border-radius:3px"><div class="l" style="left:6px;top:6px;color:#101020">Consulta/Deleção de Notas Fiscais</div></div>
</body></html>
